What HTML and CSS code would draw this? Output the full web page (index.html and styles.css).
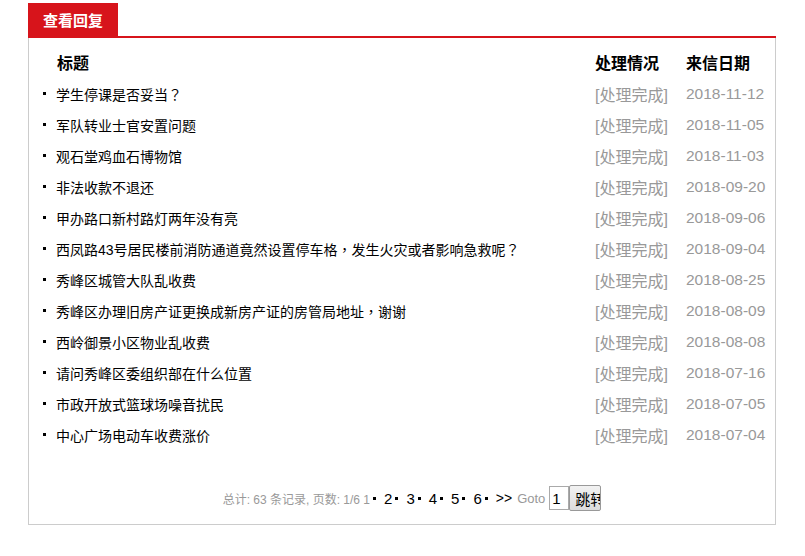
FILE: index.html
```html
<!DOCTYPE html>
<html>
<head>
<meta charset="utf-8">
<link rel="stylesheet" href="styles.css">
</head>
<body>
<div class="panel">
  <div class="tabs"><span class="tab">查看回复</span></div>
  <div class="box">
    <div class="grid head">
      <div class="c-title">标题</div>
      <div class="c-status">处理情况</div>
      <div class="c-date">来信日期</div>
    </div>
    <div class="grid row"><div class="c-title"><i class="dot"></i>学生停课是否妥当<span class="fw">？</span></div><div class="c-status">[处理完成]</div><div class="c-date">2018-11-12</div></div>
    <div class="grid row"><div class="c-title"><i class="dot"></i>军队转业士官安置问题</div><div class="c-status">[处理完成]</div><div class="c-date">2018-11-05</div></div>
    <div class="grid row"><div class="c-title"><i class="dot"></i>观石堂鸡血石博物馆</div><div class="c-status">[处理完成]</div><div class="c-date">2018-11-03</div></div>
    <div class="grid row"><div class="c-title"><i class="dot"></i>非法收款不退还</div><div class="c-status">[处理完成]</div><div class="c-date">2018-09-20</div></div>
    <div class="grid row"><div class="c-title"><i class="dot"></i>甲办路口新村路灯两年没有亮</div><div class="c-status">[处理完成]</div><div class="c-date">2018-09-06</div></div>
    <div class="grid row"><div class="c-title"><i class="dot"></i>西凤路43号居民楼前消防通道竟然设置停车格<span class="fw">，</span>发生火灾或者影响急救呢<span class="fw">？</span></div><div class="c-status">[处理完成]</div><div class="c-date">2018-09-04</div></div>
    <div class="grid row"><div class="c-title"><i class="dot"></i>秀峰区城管大队乱收费</div><div class="c-status">[处理完成]</div><div class="c-date">2018-08-25</div></div>
    <div class="grid row"><div class="c-title"><i class="dot"></i>秀峰区办理旧房产证更换成新房产证的房管局地址<span class="fw">，</span>谢谢</div><div class="c-status">[处理完成]</div><div class="c-date">2018-08-09</div></div>
    <div class="grid row"><div class="c-title"><i class="dot"></i>西岭御景小区物业乱收费</div><div class="c-status">[处理完成]</div><div class="c-date">2018-08-08</div></div>
    <div class="grid row"><div class="c-title"><i class="dot"></i>请问秀峰区委组织部在什么位置</div><div class="c-status">[处理完成]</div><div class="c-date">2018-07-16</div></div>
    <div class="grid row"><div class="c-title"><i class="dot"></i>市政开放式篮球场噪音扰民</div><div class="c-status">[处理完成]</div><div class="c-date">2018-07-05</div></div>
    <div class="grid row"><div class="c-title"><i class="dot"></i>中心广场电动车收费涨价</div><div class="c-status">[处理完成]</div><div class="c-date">2018-07-04</div></div>
    <div class="pager">
      <span class="info">总计: 63 条记录, 页数: 1/6 1</span><i class="pdot"></i>
      <span class="pn">2</span><i class="pdot"></i>
      <span class="pn">3</span><i class="pdot"></i>
      <span class="pn">4</span><i class="pdot"></i>
      <span class="pn">5</span><i class="pdot"></i>
      <span class="pn">6</span><i class="pdot"></i>
      <span class="next">&gt;&gt;</span>
      <span class="goto">Goto</span>
      <span class="inp">1</span>
      <span class="btn">跳转</span>
    </div>
  </div>
</div>
</body>
</html>
```

FILE: styles.css
```css
html, body {
  margin: 0;
  padding: 0;
  background: #fff;
}
body {
  font-family: "Liberation Sans", "Noto Sans CJK SC", sans-serif;
  color: #000;
}
.panel {
  margin: 3px 0 0 28px;
  width: 748px;
}
.tabs {
  height: 33px;
  border-bottom: 2px solid #d7141b;
  display: flex;
}
.tab {
  width: 90px;
  height: 33px;
  background: #d7141b;
  color: #fff;
  font-weight: bold;
  font-size: 15px;
  display: flex;
  align-items: center;
  justify-content: center;
}
.box {
  border: 1px solid #ccc;
  border-top: none;
  box-sizing: border-box;
  height: 487px;
  padding-top: 8px;
}
.grid {
  display: grid;
  grid-template-columns: 566px 91px 1fr;
  height: 31px;
  align-items: center;
  white-space: nowrap;
}
.head {
  height: 32px;
  font-size: 16px;
  font-weight: bold;
}
.head .c-title {
  padding-left: 28px;
}
.row .c-title {
  font-size: 14px;
  display: flex;
  align-items: center;
  padding-left: 14px;
}
.fw {
  font-family: "Noto Sans CJK TC", sans-serif;
}
.dot {
  width: 3px;
  height: 3px;
  background: #000;
  margin-right: 10px;
  flex: none;
}
.row .c-status {
  font-size: 16px;
  color: #999;
}
.row .c-date {
  font-size: 15.5px;
  color: #999;
}
.pager {
  margin-top: 35px;
  height: 26px;
  display: flex;
  align-items: center;
  justify-content: center;
  padding-left: 20px;
  font-size: 12px;
  white-space: nowrap;
}
.info, .goto {
  color: #999;
}
.pdot {
  width: 3px;
  height: 3px;
  background: #000;
  margin: 0 8px 0 3px;
}
.pn {
  font-size: 15px;
}
.next {
  font-size: 14px;
  margin-right: 5px;
}
.goto {
  font-size: 13px;
  margin-right: 4px;
}
.inp {
  width: 20px;
  height: 24px;
  box-sizing: border-box;
  border: 1px solid #aaa;
  font-size: 15px;
  padding-left: 2px;
  display: flex;
  align-items: center;
}
.btn {
  width: 32px;
  height: 26px;
  box-sizing: border-box;
  border: 1px solid #999;
  border-radius: 2px;
  background: linear-gradient(#f2f2f2, #dcdcdc);
  font-size: 15px;
  padding-left: 5px;
  overflow: hidden;
  display: flex;
  align-items: center;
}
```
